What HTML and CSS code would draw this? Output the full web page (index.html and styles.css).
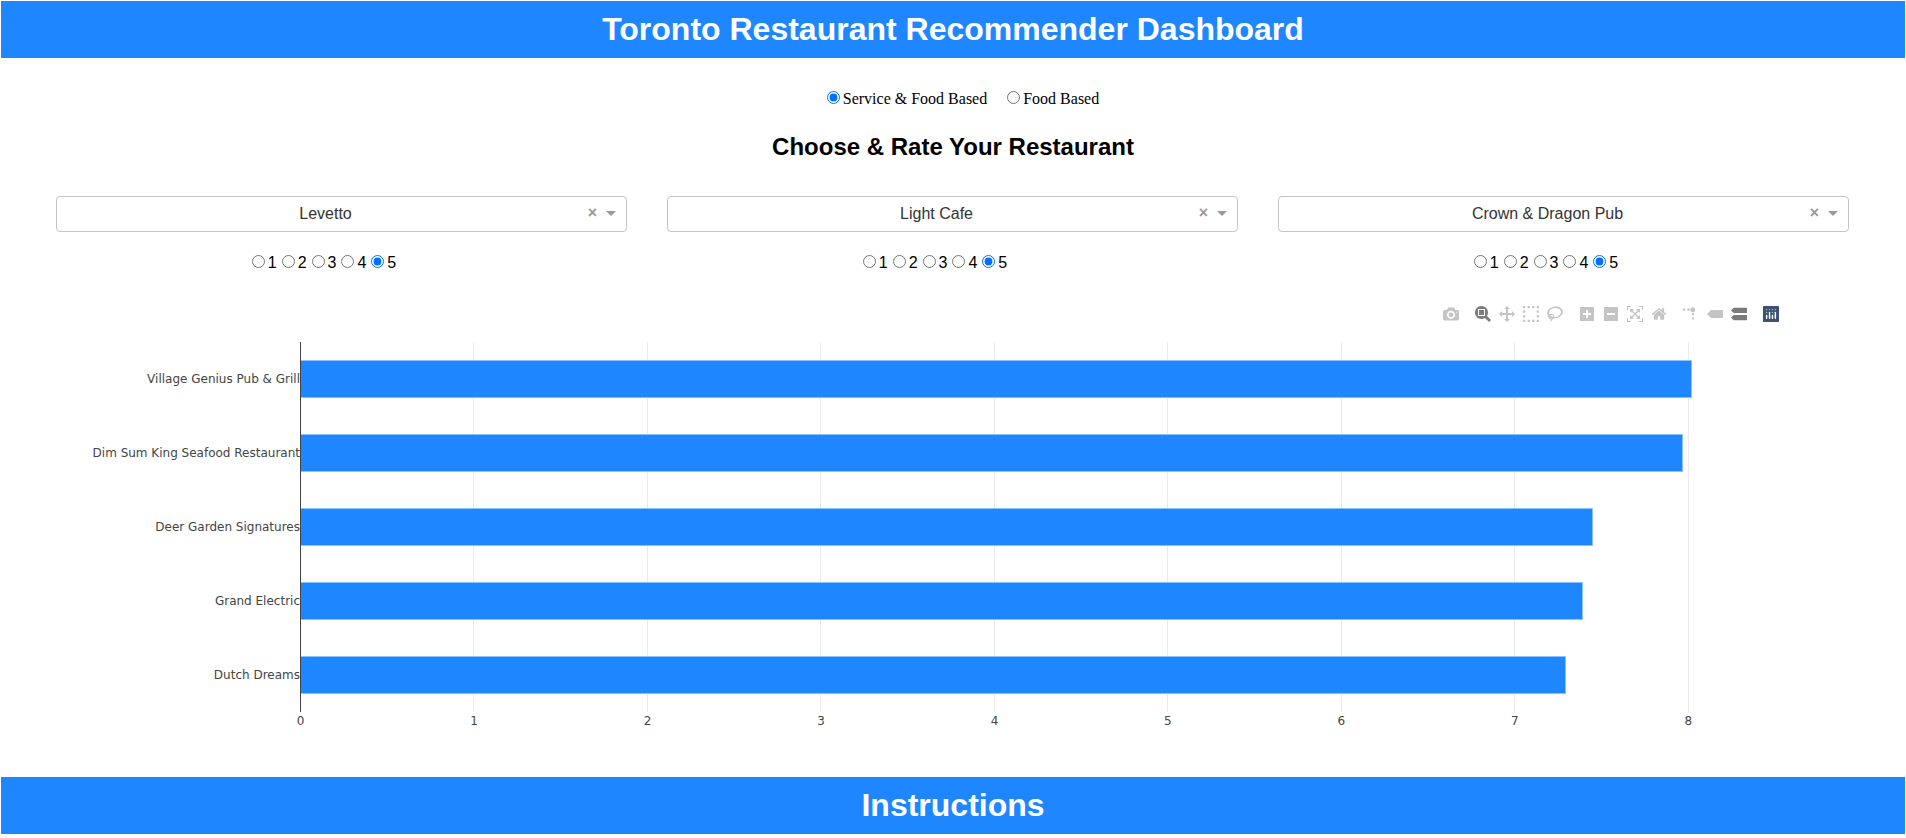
FILE: index.html
```html
<!DOCTYPE html>
<html lang="en">
<head>
<meta charset="utf-8">
<title>Toronto Restaurant Recommender Dashboard</title>
<link rel="stylesheet" href="styles.css">
</head>
<body>
<header class="banner"><h1 class="banner-title">Toronto Restaurant Recommender Dashboard</h1></header>
<main>
  <div class="mode">
    <label class="mode-option"><input class="radio" type="radio" name="mode" checked>Service &amp; Food Based</label>
    <label class="mode-option"><input class="radio" type="radio" name="mode">Food Based</label>
  </div>
  <h2 class="section-title">Choose &amp; Rate Your Restaurant</h2>
  <div class="pickers">
    <div class="picker">
      <div class="dropdown">
        <select class="dropdown-select" aria-label="First restaurant"><option>Levetto</option></select>
        <button class="dropdown-clear" type="button" aria-label="Clear first restaurant">×</button>
        <span class="dropdown-arrow"></span>
      </div>
      <div class="rating">
        <label><input class="radio" type="radio" name="r1">1</label><label><input class="radio" type="radio" name="r1">2</label><label><input class="radio" type="radio" name="r1">3</label><label><input class="radio" type="radio" name="r1">4</label><label><input class="radio" type="radio" name="r1" checked>5</label>
      </div>
    </div>
    <div class="picker">
      <div class="dropdown">
        <select class="dropdown-select" aria-label="Second restaurant"><option>Light Cafe</option></select>
        <button class="dropdown-clear" type="button" aria-label="Clear second restaurant">×</button>
        <span class="dropdown-arrow"></span>
      </div>
      <div class="rating">
        <label><input class="radio" type="radio" name="r2">1</label><label><input class="radio" type="radio" name="r2">2</label><label><input class="radio" type="radio" name="r2">3</label><label><input class="radio" type="radio" name="r2">4</label><label><input class="radio" type="radio" name="r2" checked>5</label>
      </div>
    </div>
    <div class="picker">
      <div class="dropdown">
        <select class="dropdown-select" aria-label="Third restaurant"><option>Crown &amp; Dragon Pub</option></select>
        <button class="dropdown-clear" type="button" aria-label="Clear third restaurant">×</button>
        <span class="dropdown-arrow"></span>
      </div>
      <div class="rating">
        <label><input class="radio" type="radio" name="r3">1</label><label><input class="radio" type="radio" name="r3">2</label><label><input class="radio" type="radio" name="r3">3</label><label><input class="radio" type="radio" name="r3">4</label><label><input class="radio" type="radio" name="r3" checked>5</label>
      </div>
    </div>
  </div>

  <section class="chart" aria-label="Recommended restaurants">
    <div class="modebar">
      <div class="modebar-group">
        <button class="tool" type="button" aria-label="Download plot as a png"><svg viewBox="0 0 1000 1000"><path transform="matrix(1 0 0 -1 0 850)" d="m500 450c-83 0-150-67-150-150 0-83 67-150 150-150 83 0 150 67 150 150 0 83-67 150-150 150z m400 150h-120c-16 0-34 13-39 29l-31 93c-6 15-23 28-40 28h-340c-16 0-34-13-39-28l-31-94c-6-15-23-28-40-28h-120c-55 0-100-45-100-100v-450c0-55 45-100 100-100h800c55 0 100 45 100 100v450c0 55-45 100-100 100z m-400-550c-138 0-250 112-250 250 0 138 112 250 250 250 138 0 250-112 250-250 0-138-112-250-250-250z m365 380c-19 0-35 16-35 35 0 19 16 35 35 35 19 0 35-16 35-35 0-19-16-35-35-35z"/></svg></button>
      </div>
      <div class="modebar-group">
        <button class="tool tool-active" type="button" aria-label="Zoom"><svg viewBox="0 0 1000 1000"><path transform="matrix(1 0 0 -1 0 850)" d="m1000-25l-250 251c40 63 63 138 63 218 0 224-182 406-407 406-224 0-406-182-406-406s183-406 407-406c80 0 155 22 218 62l250-250 125 125z m-812 250l0 438 437 0 0-438-437 0z m62 375l313 0 0-312-313 0 0 312z"/></svg></button>
        <button class="tool" type="button" aria-label="Pan"><svg viewBox="0 0 1000 1000"><path transform="matrix(1 0 0 -1 0 850)" d="m1000 350l-187 188 0-125-250 0 0 250 125 0-188 187-187-187 125 0 0-250-250 0 0 125-188-188 186-187 0 125 252 0 0-250-125 0 187-188 188 188-125 0 0 250 250 0 0-126 187 188z"/></svg></button>
        <button class="tool" type="button" aria-label="Box select"><svg viewBox="0 0 1000 1000"><path transform="matrix(1 0 0 -1 0 850)" d="m0 850l0-143 143 0 0 143-143 0z m286 0l0-143 143 0 0 143-143 0z m285 0l0-143 143 0 0 143-143 0z m286 0l0-143 143 0 0 143-143 0z m-857-286l0-143 143 0 0 143-143 0z m857 0l0-143 143 0 0 143-143 0z m-857-285l0-143 143 0 0 143-143 0z m857 0l0-143 143 0 0 143-143 0z m-857-286l0-143 143 0 0 143-143 0z m286 0l0-143 143 0 0 143-143 0z m285 0l0-143 143 0 0 143-143 0z m286 0l0-143 143 0 0 143-143 0z"/></svg></button>
        <button class="tool" type="button" aria-label="Lasso select"><svg viewBox="0 0 1031 1000"><path transform="matrix(1 0 0 -1 0 850)" d="m1018 538c-36 207-290 336-568 286-277-48-473-256-436-463 10-57 36-108 76-151-13-66 11-137 68-183 34-28 75-41 114-42l-55-70 0 0c-2-1-3-2-4-3-10-14-8-34 5-45 14-11 34-8 45 4 1 1 2 3 2 5l0 0 113 140c16 11 31 24 45 40 4 3 6 7 8 11 48-3 100 0 151 9 278 48 473 255 436 462z m-624-379c-80 14-149 48-197 96 42 42 109 47 156 9 33-26 47-66 41-105z m-187-74c-19 16-33 37-39 60 50-32 109-55 174-68-42-25-95-24-135 8z m360 75c-34-7-69-9-102-8 8 62-16 128-68 170-73 59-175 54-244-5-9 20-16 40-20 61-28 159 121 317 333 354s407-60 434-217c28-159-121-318-333-355z"/></svg></button>
      </div>
      <div class="modebar-group">
        <button class="tool" type="button" aria-label="Zoom in"><svg viewBox="0 0 875 1000"><path transform="matrix(1 0 0 -1 0 850)" d="m1 787l0-875 875 0 0 875-875 0z m687-500l-187 0 0-187-125 0 0 187-188 0 0 125 188 0 0 187 125 0 0-187 187 0 0-125z"/></svg></button>
        <button class="tool" type="button" aria-label="Zoom out"><svg viewBox="0 0 875 1000"><path transform="matrix(1 0 0 -1 0 850)" d="m0 788l0-876 876 0 0 876-876 0z m688-500l-500 0 0 125 500 0 0-125z"/></svg></button>
        <button class="tool" type="button" aria-label="Autoscale"><svg viewBox="0 0 1000 1000"><path transform="matrix(1 0 0 -1 0 850)" d="m250 850l-187 0-63 0 0-62 0-188 63 0 0 188 187 0 0 62z m688 0l-188 0 0-62 188 0 0-188 62 0 0 188 0 62-62 0z m-875-938l0 188-63 0 0-188 0-62 63 0 187 0 0 62-187 0z m875 188l0-188-188 0 0-62 188 0 62 0 0 62 0 188-62 0z m-125 188l-1 0-93-94-156 156 156 156 92-93 2 0 0 250-250 0 0-2 93-92-156-156-156 156 94 92 0 2-250 0 0-250 0 0 93 93 157-156-157-156-93 94 0 0 0-250 250 0 0 0-94 93 156 157 156-157-93-93 0 0 250 0 0 250z"/></svg></button>
        <button class="tool" type="button" aria-label="Reset axes"><svg viewBox="0 0 928 1000"><path transform="matrix(1 0 0 -1 0 850)" d="m786 296v-267q0-15-11-26t-25-10h-214v214h-143v-214h-214q-15 0-25 10t-11 26v267q0 1 0 2t0 2l321 264 321-264q1-1 1-4z m124 39l-34-41q-5-5-12-6h-2q-7 0-12 3l-386 322-386-322q-7-4-13-4-7 2-12 7l-35 41q-4 5-3 13t6 12l401 334q18 15 42 15t43-15l136-114v109q0 8 5 13t13 5h107q8 0 13-5t5-13v-227l122-102q5-5 6-12t-4-13z"/></svg></button>
      </div>
      <div class="modebar-group">
        <button class="tool" type="button" aria-label="Toggle spike lines"><svg viewBox="0 0 1000 1000"><path transform="matrix(1.5 0 0 -1.5 0 850)" d="M512 409c0-57-46-104-103-104-57 0-104 47-104 104 0 57 47 103 104 103 57 0 103-46 103-103z m-327-39l92 0 0 92-92 0z m-185 0l92 0 0 92-92 0z m370-186l92 0 0 93-92 0z m0-184l92 0 0 92-92 0z"/></svg></button>
        <button class="tool" type="button" aria-label="Show closest data on hover"><svg viewBox="0 0 1500 1000"><path transform="matrix(1 0 0 -1 0 850)" d="m375 725l0 0-375-375 375-374 0-1 1125 0 0 750-1125 0z"/></svg></button>
        <button class="tool tool-active" type="button" aria-label="Compare data on hover"><svg viewBox="0 0 1125 1000"><path transform="matrix(1 0 0 -1 0 850)" d="m187 786l0 2-187-188 188-187 0 0 937 0 0 373-938 0z m0-499l0 1-187-188 188-188 0 0 937 0 0 376-938-1z"/></svg></button>
      </div>
      <div class="modebar-group">
        <a class="tool" href="#" aria-label="Produced with Plotly"><svg viewBox="0 0 132 132"><rect fill="#3f4f75" width="132" height="132" rx="6"/><g fill="#80cfbe"><circle cx="30" cy="30" r="6"/><circle cx="54" cy="30" r="6"/><circle cx="78" cy="30" r="6"/><circle cx="102" cy="30" r="6"/><circle cx="30" cy="54" r="6"/><circle cx="78" cy="54" r="6"/></g><path fill="#fff" d="M30 72a6 6 0 0 0-6 6v24a6 6 0 0 0 12 0V78a6 6 0 0 0-6-6zM78 72a6 6 0 0 0-6 6v24a6 6 0 0 0 12 0V78a6 6 0 0 0-6-6zM54 48a6 6 0 0 0-6 6v48a6 6 0 0 0 12 0V54a6 6 0 0 0-6-6zM102 48a6 6 0 0 0-6 6v48a6 6 0 0 0 12 0V54a6 6 0 0 0-6-6z"/></svg></a>
      </div>
    </div>
    <div class="plot">
      <div class="names">
        <span>Village Genius Pub &amp; Grill</span>
        <span>Dim Sum King Seafood Restaurant</span>
        <span>Deer Garden Signatures</span>
        <span>Grand Electric</span>
        <span>Dutch Dreams</span>
      </div>
      <div class="scale lines"><i></i><i></i><i></i><i></i><i></i><i></i><i></i><i></i><i></i></div>
      <div class="bars">
        <div class="bar" style="width:95%"></div>
        <div class="bar" style="width:94.4%"></div>
        <div class="bar" style="width:88.25%"></div>
        <div class="bar" style="width:87.57%"></div>
        <div class="bar" style="width:86.4%"></div>
      </div>
      <div class="scale ticks"><span>0</span><span>1</span><span>2</span><span>3</span><span>4</span><span>5</span><span>6</span><span>7</span><span>8</span></div>
    </div>
  </section>
</main>
<section class="banner"><h2 class="banner-title">Instructions</h2></section>
</body>
</html>
```

FILE: styles.css
```css
* { box-sizing: border-box; }

body {
  margin: 0;
  padding: 1px;
  background: #fff;
  color: #000;
  font: 16px/18px "Liberation Serif", "Times New Roman", serif;
}

.banner {
  padding: 10px;
  background: #1e86ff;
  color: #fff;
  text-align: center;
}

.banner-title {
  margin: 0;
  font: bold 32px/37px "Liberation Sans", Arial, sans-serif;
}

.radio {
  width: 13px;
  height: 13px;
  margin: 3px 3px 0 5px;
  accent-color: #0070ff;
}

.mode {
  display: flex;
  justify-content: center;
  padding-top: 30px;
}

.mode-option { margin-left: 15px; }

.section-title {
  margin: 25px 0 0;
  font: bold 24px/28px "Liberation Sans", Arial, sans-serif;
  text-align: center;
}

.pickers {
  display: grid;
  grid-template-columns: repeat(3, 1fr);
  gap: 40px;
  padding: 35px 56px 0 55px;
  font-family: "Liberation Sans", Arial, sans-serif;
}

.dropdown { position: relative; }

.dropdown-select {
  appearance: none;
  display: block;
  width: 100%;
  height: 36px;
  padding: 0 42px 0 10px;
  border: 1px solid #c4c4c4;
  border-radius: 4px;
  background: #fff;
  color: #333;
  font: 16px/34px "Liberation Sans", Arial, sans-serif;
  text-align: center;
  text-align-last: center;
}

.dropdown-clear {
  position: absolute;
  top: 8px;
  right: 26px;
  width: 17px;
  height: 18px;
  padding: 0;
  border: 0;
  background: none;
  color: #999;
  font: bold 16px/18px "Liberation Sans", Arial, sans-serif;
}

.dropdown-arrow {
  position: absolute;
  top: 15px;
  right: 11px;
  border: 5px solid transparent;
  border-top-color: #999;
  border-bottom-width: 0;
  pointer-events: none;
}

.rating {
  display: flex;
  justify-content: center;
  padding: 20px 40px 0 0;
}

.chart {
  padding: 31px 122px 48px 39px;
  color: #444;
  font: 12px/16px "DejaVu Sans", Verdana, sans-serif;
}

.modebar {
  display: flex;
  justify-content: flex-end;
}

.modebar-group {
  display: flex;
  padding-left: 8px;
}

.tool {
  display: block;
  height: 22px;
  padding: 3px 4px;
  border: 0;
  background: none;
  fill: #c4c4c4;
}

.tool-active { fill: #7b7b7b; }

.tool svg {
  display: block;
  width: 16px;
  height: 16px;
}

.plot {
  display: grid;
  grid-template-columns: 260px 1fr;
  padding: 17px 18px 0 0;
}

.names,
.bars {
  display: grid;
  grid-auto-rows: 74px;
  align-items: center;
}

.names { text-align: right; }

.scale {
  display: grid;
  grid-template-columns: repeat(8, 9fr) 4fr;
}

.lines,
.bars { grid-area: 1 / 2; }

.lines i { border-left: 1px solid #eaeaea; }

.bars { border-left: 1px solid #444; }

.bar {
  height: 38px;
  border: 1px solid #8ec2ff;
  border-left: 0;
  background: #1e86ff;
}

.ticks { grid-column: 2; }

.ticks span {
  display: flex;
  justify-content: center;
  width: 1px;
  padding-top: 1px;
}
```
